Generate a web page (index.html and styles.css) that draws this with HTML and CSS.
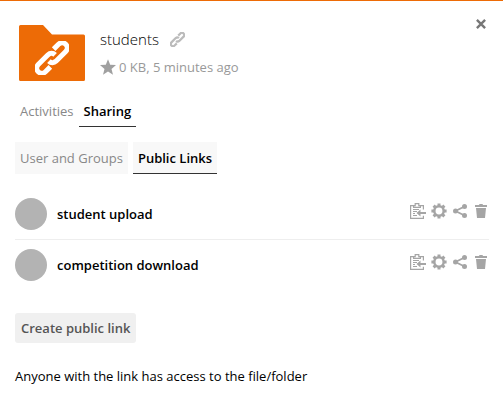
FILE: index.html
```html
<!DOCTYPE html>
<html lang="en">
<head>
<meta charset="utf-8">
<title>students</title>
<link rel="stylesheet" href="styles.css">
</head>
<body>
<svg class="sprite" aria-hidden="true">
  <symbol id="link" viewBox="0 0 32 32">
    <g fill="none" stroke="currentColor" stroke-width="4.800" transform="rotate(-45 16 16)">
      <path d="M23 11.200H29.500a4.800 4.800 0 0 1 0 9.600H16.500a4.800 4.800 0 0 1-4.600-4.800"/>
      <path d="M9 20.800H2.500a4.800 4.800 0 0 1 0-9.600H15.500a4.800 4.800 0 0 1 4.600 4.800"/>
    </g>
  </symbol>
  <symbol id="clip" viewBox="0 0 16 16">
    <path fill="none" stroke="currentColor" stroke-width="1.200" d="M3.500 2.600H.6v12.800h12.800v-2.600M10.500 2.600h2.900v4M3.600 4.400V2.600h1.600V.7h3.600v1.900h1.600v1.800z"/>
    <path fill="none" stroke="currentColor" d="M3 6.500h6M3 8.500h4M3 10.500h2M3 12.500h4"/>
    <path fill="currentColor" d="M6.500 10 10.500 6.500V9H16v2h-5.500v2.500z"/>
  </symbol>
  <symbol id="gear" viewBox="0 0 16 16">
    <circle cx="8" cy="8" r="4.700" fill="none" stroke="currentColor" stroke-width="2.500"/>
    <path stroke="currentColor" stroke-width="3" d="M8 .4v2.800M8 12.800v2.800M.4 8h2.800M12.800 8h2.800M2.600 2.600l2 2M11.400 11.400l2 2M2.600 13.400l2-2M11.400 4.600l2-2"/>
  </symbol>
  <symbol id="share" viewBox="0 0 16 16">
    <path fill="none" stroke="currentColor" stroke-width="1.800" d="M12.500 3.500 3.500 8l9 4.500"/>
    <g fill="currentColor"><circle cx="3.500" cy="8" r="2.500"/><circle cx="12.500" cy="3.500" r="2.500"/><circle cx="12.500" cy="12.500" r="2.500"/></g>
  </symbol>
  <symbol id="trash" viewBox="0 0 16 16">
    <path fill="currentColor" d="M6.500 1h3l.5 1h4v2H2V2h4zM3 5h10l-1 10H4z"/>
  </symbol>
</svg>
<aside class="panel">
  <button class="close" aria-label="Close"><svg viewBox="0 0 10 10"><path d="M.9.900l8.200 8.200M9.100.900.9 9.100"/></svg></button>
  <header class="file">
    <svg class="folder" viewBox="0 0 66 56" aria-hidden="true">
      <path fill="#ed6b06" d="M1.500 0H24l9 9.500h31.500Q66 9.500 66 11v43.500q0 1.500-1.500 1.500h-63Q0 56 0 54.500v-53Q0 0 1.500 0z"/>
      <use href="#link" x="16" y="16" width="34" height="34"/>
    </svg>
    <div class="info">
      <h1 class="name">students <a class="permalink" href="#" aria-label="Copy link"><svg><use href="#link"/></svg></a></h1>
      <p class="meta"><svg class="star" viewBox="0 0 16 16" aria-hidden="true"><path d="M8 .3 10.200 5.700l5.800.4-4.500 3.800 1.500 5.800L8 12.500l-5 3.200 1.500-5.800L0 6.100l5.800-.4z"/></svg>0 KB, 5 minutes ago</p>
    </div>
  </header>
  <nav class="tabs">
    <a href="#">Activities</a>
    <a class="active" href="#">Sharing</a>
  </nav>
  <nav class="tabs subtabs">
    <a href="#">User and Groups</a>
    <a class="active" href="#">Public Links</a>
  </nav>
  <ul class="links">
    <li>
      <span class="avatar"></span><span class="label">student upload</span>
      <span class="actions">
        <button aria-label="Copy to clipboard"><svg><use href="#clip"/></svg></button>
        <button aria-label="Edit"><svg><use href="#gear"/></svg></button>
        <button aria-label="Share"><svg><use href="#share"/></svg></button>
        <button aria-label="Delete"><svg><use href="#trash"/></svg></button>
      </span>
    </li>
    <li>
      <span class="avatar"></span><span class="label">competition download</span>
      <span class="actions">
        <button aria-label="Copy to clipboard"><svg><use href="#clip"/></svg></button>
        <button aria-label="Edit"><svg><use href="#gear"/></svg></button>
        <button aria-label="Share"><svg><use href="#share"/></svg></button>
        <button aria-label="Delete"><svg><use href="#trash"/></svg></button>
      </span>
    </li>
  </ul>
  <button class="create">Create public link</button>
  <p class="hint">Anyone with the link has access to the file/folder</p>
</aside>
</body>
</html>
```
FILE: styles.css
```css
* { box-sizing: border-box; margin: 0; padding: 0; }
body { background: #fff; color: #000; font: 13px/20px "Open Sans", sans-serif; }
button { border: 0; background: none; color: inherit; font: inherit; cursor: pointer; }
a { color: inherit; text-decoration: none; }
svg { display: block; }
.sprite { position: absolute; width: 0; height: 0; }
.panel { position: relative; padding: 24px 14px 16px 15px; border-top: 1px solid #ed6b06; }

.close { position: absolute; top: 18px; right: 17px; }
.close svg { width: 10px; height: 10px; fill: none; stroke: #777; stroke-width: 2.400; }

.file { display: flex; gap: 15px; padding-left: 4px; }
.folder { width: 66px; height: 56px; color: #fff; }
.info { padding-top: 3px; }
.name { display: flex; align-items: center; gap: 11px; font-size: 15px; font-weight: 300; line-height: 22px; color: #000; }
.permalink { color: #bbb; }
.permalink svg { width: 15px; height: 15px; }
.meta { display: flex; align-items: center; gap: 3px; margin-top: 7px; color: #999; }
.star { width: 16px; height: 16px; fill: #a0a0a0; }

.tabs { display: flex; margin-top: 15px; }
.tabs a { padding: 5px; border-bottom: 1px solid transparent; color: #888; }
.tabs .active { border-color: #333; color: #000; font-weight: 600; }
.subtabs { gap: 5px; }
.subtabs a { padding: 6px 5px 5px; background: #f8f8f8; }

.links { margin-top: 15px; list-style: none; }
.links li { display: flex; align-items: center; gap: 10px; padding: 9px 0; }
.links li + li { border-top: 1px solid #eee; }
.avatar { width: 32px; height: 32px; border-radius: 50%; background: #b3b3b3; }
.label { flex: 1; font-weight: 600; }
.actions { display: flex; gap: 5px; align-self: flex-start; padding-top: 5px; color: #a5a5a5; }
.actions svg { width: 16px; height: 16px; }

.create { margin-top: 23px; padding: 5px 6px; border-radius: 3px; background: #f0f0f0; color: #555; font-weight: 600; }
.hint { margin-top: 23px; }
```
